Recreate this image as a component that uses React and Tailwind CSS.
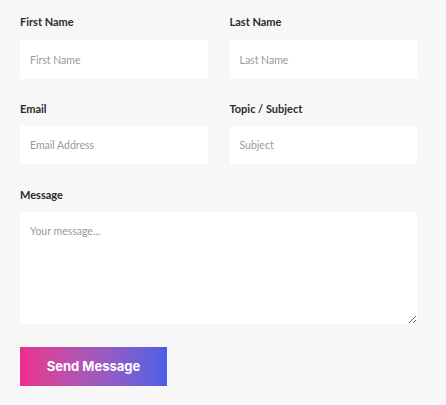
export default function App() {
  return (
    <main className="min-h-screen bg-[#f7f7f7] pt-[14px] pl-[20px]" style={{ fontFamily: "Lato, 'Open Sans', sans-serif" }}>
      <form className="w-[397px] flex flex-col">
        <div className="grid grid-cols-2 gap-x-[22px]">
          <div className="flex flex-col">
            <label className="text-[11px] font-bold text-[#2b2b2b] leading-[16px] mb-[10px]">First Name</label>
            <input className="h-[39px] bg-white px-[10px] text-[10.5px] placeholder-[#9a9a9a] outline-none" placeholder="First Name" />
          </div>
          <div className="flex flex-col">
            <label className="text-[11px] font-bold text-[#2b2b2b] leading-[16px] mb-[10px]">Last Name</label>
            <input className="h-[39px] bg-white px-[10px] text-[10.5px] placeholder-[#9a9a9a] outline-none" placeholder="Last Name" />
          </div>
          <div className="flex flex-col mt-[22px]">
            <label className="text-[11px] font-bold text-[#2b2b2b] leading-[16px] mb-[9px]">Email</label>
            <input className="h-[38px] bg-white px-[10px] text-[10.5px] placeholder-[#9a9a9a] outline-none" placeholder="Email Address" />
          </div>
          <div className="flex flex-col mt-[22px]">
            <label className="text-[11px] font-bold text-[#2b2b2b] leading-[16px] mb-[9px]">Topic / Subject</label>
            <input className="h-[38px] bg-white px-[10px] text-[10.5px] placeholder-[#9a9a9a] outline-none" placeholder="Subject" />
          </div>
        </div>
        <div className="flex flex-col mt-[23px]">
          <label className="text-[11px] font-bold text-[#2b2b2b] leading-[16px] mb-[9px]">Message</label>
          <textarea className="h-[112px] bg-white px-[10px] py-[12px] text-[10.5px] placeholder-[#9a9a9a] outline-none" placeholder="Your message..." />
        </div>
        <div className="mt-[23px]">
          <button type="button" className="w-[147px] h-[39px] bg-gradient-to-r from-[#ec2a8c] to-[#4a5ee6] text-white text-[13px] font-bold" style={{ fontFamily: "Inter, sans-serif" }}>
            Send Message
          </button>
        </div>
      </form>
    </main>
  );
}
